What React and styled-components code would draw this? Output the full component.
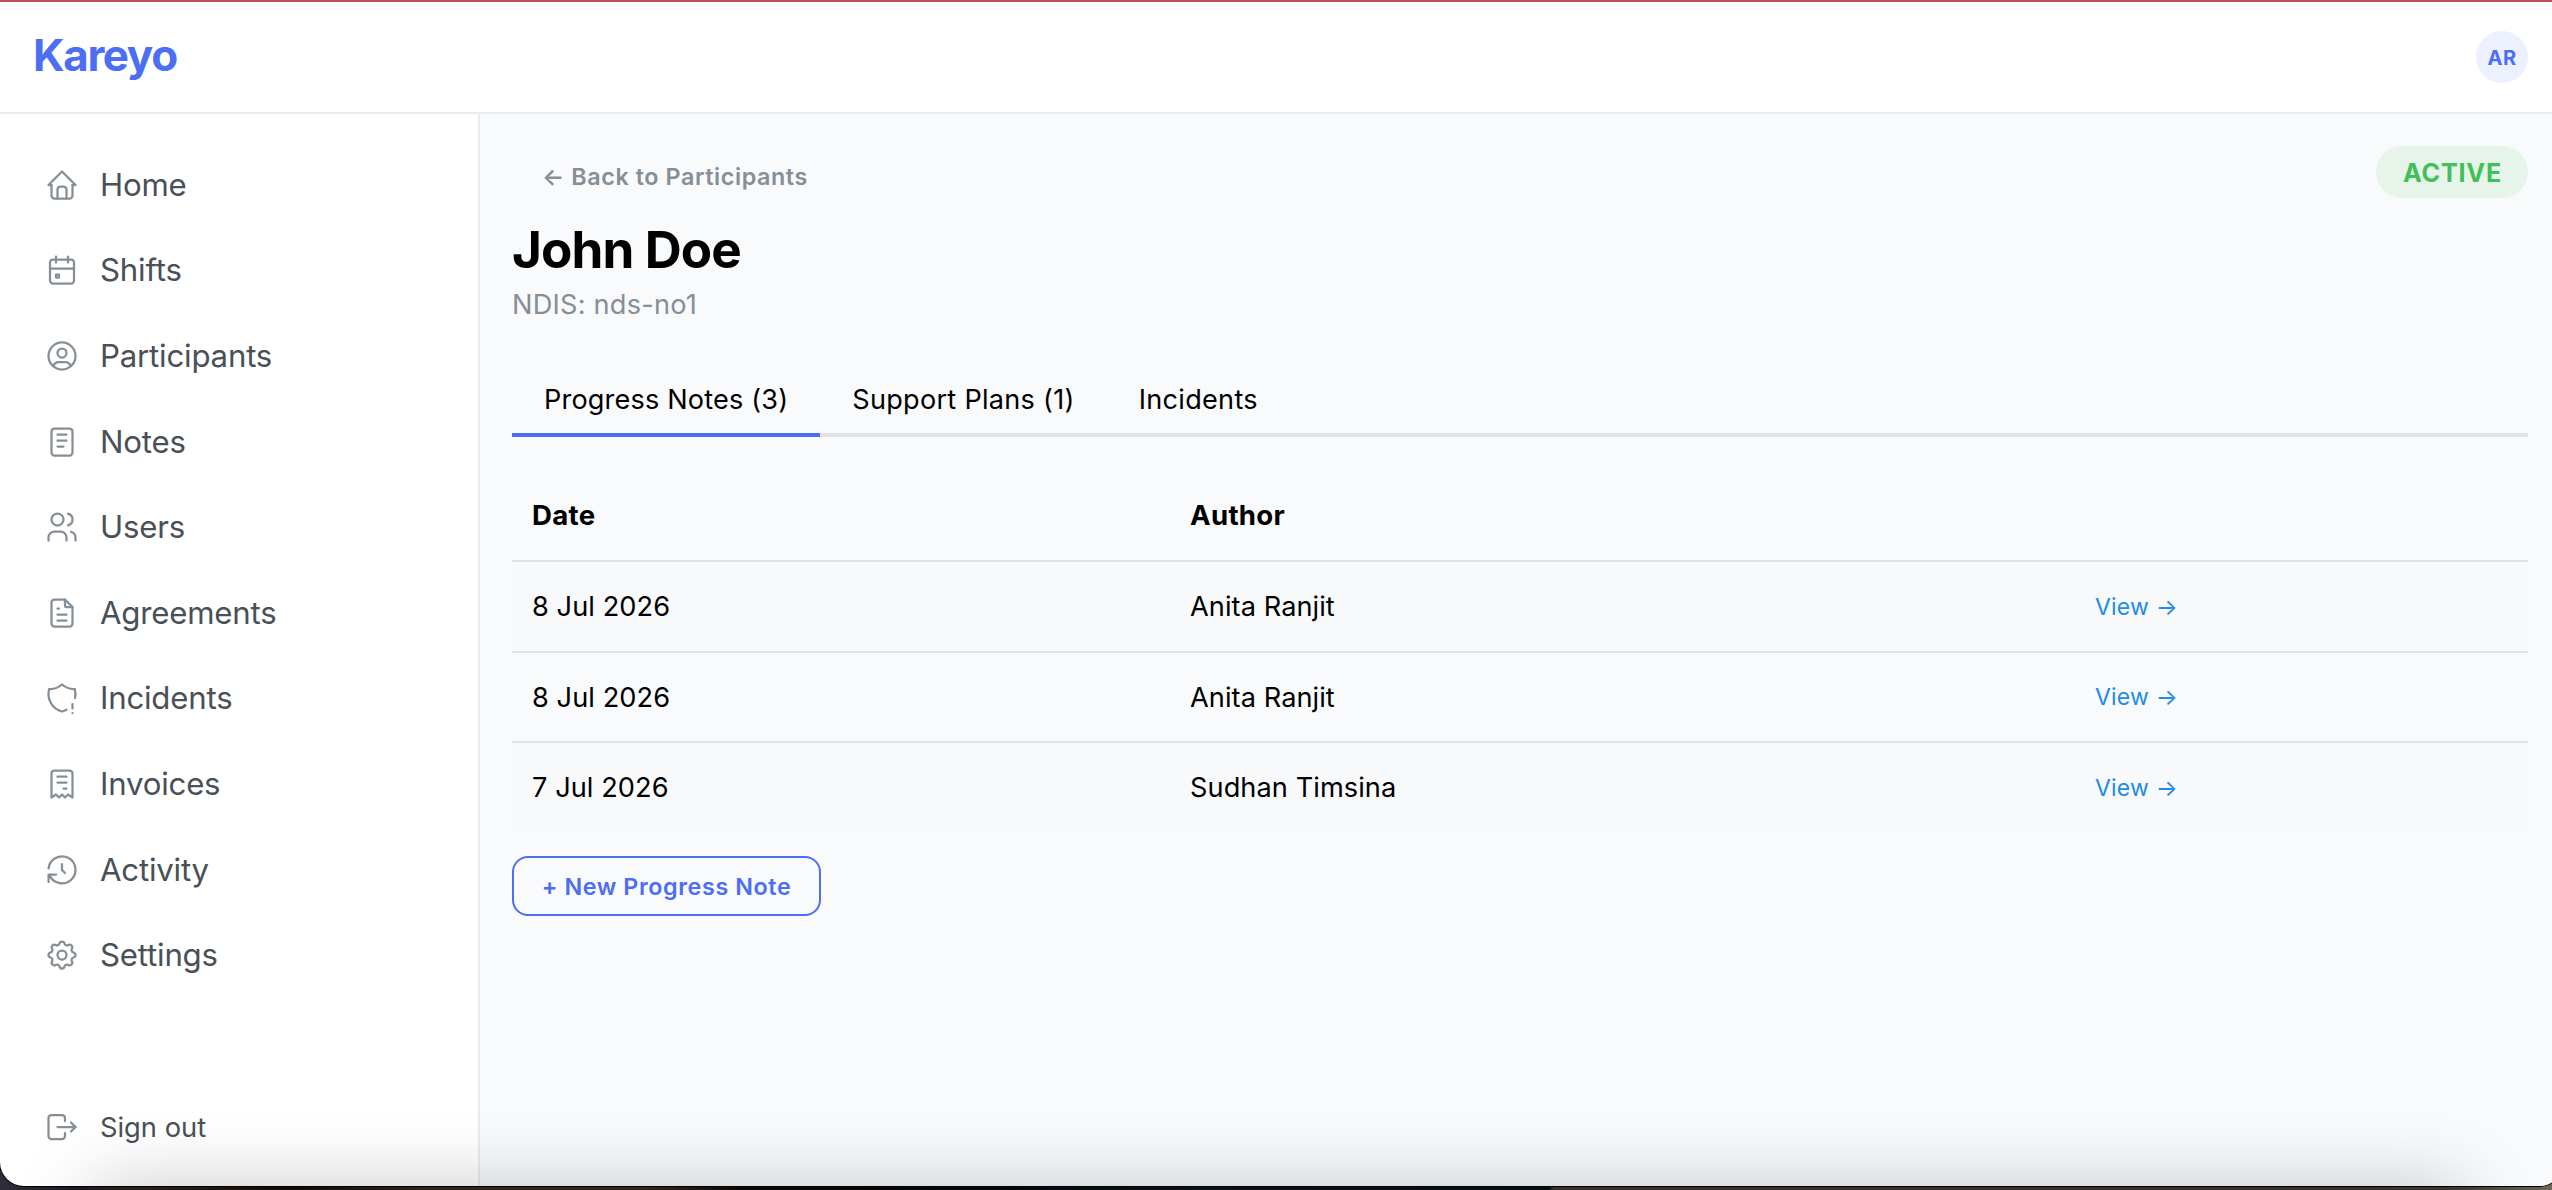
import React from "react";
import styled, { createGlobalStyle, css } from "styled-components";
import {
  TbHome,
  TbCalendarEvent,
  TbUserCircle,
  TbNotes,
  TbUsers,
  TbFileText,
  TbShieldExclamation,
  TbReceipt,
  TbHistory,
  TbSettings,
  TbLogout,
} from "react-icons/tb";

const GlobalStyle = createGlobalStyle`
  * { box-sizing: border-box; }
  body {
    margin: 0;
    overflow: hidden;
    font-family: Inter, "Liberation Sans", sans-serif;
    -webkit-font-smoothing: antialiased;
  }
`;

const Desktop = styled.div`
  width: 100%;
  height: 1190px;
  overflow: hidden;
  background: linear-gradient(
    90deg,
    #2e2e3a 0,
    #1c1a20 80px,
    #2c2119 140px,
    #0f0b08 290px,
    #33241a 430px,
    #33241a 650px,
    #0a0806 740px,
    #04070b 1000px,
    #08121d 1200px,
    #060c16 1549px,
    #35312b 1553px,
    #35312b 2230px,
    #3a342d 2450px,
    #6b6658 2552px
  );
`;

const Window = styled.div`
  position: relative;
  display: flex;
  flex-direction: column;
  width: 2563px;
  height: 1186px;
  overflow: hidden;
  background: #fff;
  border-top: 2px solid #bb5157;
  border-radius: 0 0 24px 24px;
  box-shadow: 0 0 0 1px #000;
`;

const BottomShade = styled.div`
  position: absolute;
  top: 100%;
  left: 90px;
  right: 100px;
  height: 200px;
  box-shadow: 0 0 76px rgba(0, 0, 0, 0.21);
  pointer-events: none;
`;

const Header = styled.header`
  display: flex;
  align-items: center;
  justify-content: space-between;
  flex: none;
  height: 112px;
  padding: 0 35px 0 33px;
  border-bottom: 2px solid #e9ecef;
`;

const Brand = styled.div`
  color: #4c6ef5;
  font-size: 44px;
  font-weight: 700;
  letter-spacing: -1.4px;
  line-height: 52px;
  padding-bottom: 4px;
`;

const Avatar = styled.div`
  display: flex;
  align-items: center;
  justify-content: center;
  width: 52px;
  height: 52px;
  padding-top: 1px;
  border-radius: 50%;
  background: #edf0fe;
  color: #4c6ef5;
  font-size: 20px;
  font-weight: 700;
  letter-spacing: 0.4px;
`;

const Body = styled.div`
  display: flex;
  flex: 1;
  min-height: 0;
`;

const Sidebar = styled.nav`
  display: flex;
  flex-direction: column;
  justify-content: space-between;
  flex: none;
  width: 480px;
  padding: 28px 0 29px;
  border-right: 2px solid #e9ecef;
`;

const NavList = styled.div`
  display: flex;
  flex-direction: column;
`;

const NavItem = styled.a`
  display: flex;
  align-items: center;
  gap: 20px;
  height: ${(p) => (p.$compact ? 60 : 85.6)}px;
  padding: 0 44px;
  color: #495057;
  font-size: ${(p) => (p.$compact ? 27.3 : 31.2)}px;
  letter-spacing: ${(p) => (p.$compact ? 0 : -0.2)}px;

  svg {
    flex: none;
    width: 36px;
    height: 36px;
    color: #868e96;
    stroke-width: 1.5;
  }
`;

const Main = styled.main`
  display: flex;
  flex-direction: column;
  align-items: stretch;
  flex: 1;
  padding: 32px 35px 0 32px;
  background: #f9fafc;
`;

const TopRow = styled.div`
  display: flex;
  align-items: flex-start;
  justify-content: space-between;
`;

const buttonText = css`
  font-family: inherit;
  font-size: 23.3px;
  font-weight: 600;
  letter-spacing: 0.6px;
  white-space: nowrap;
`;

const BackButton = styled.button`
  ${buttonText}
  height: 60px;
  padding: 0 30px;
  border: 0;
  background: transparent;
  color: #868e96;
`;

const StatusBadge = styled.span`
  display: flex;
  align-items: center;
  justify-content: center;
  width: 152px;
  height: 52px;
  padding: 2px 0 0 1px;
  border-radius: 26px;
  background: #e6f4ea;
  color: #40c057;
  font-size: 25.2px;
  font-weight: 700;
  letter-spacing: 0.8px;
`;

const Title = styled.h1`
  margin: 11px 0 0;
  color: #000;
  font-size: 51.2px;
  font-weight: 700;
  letter-spacing: -0.9px;
  line-height: 64px;
`;

const Subtitle = styled.div`
  margin-top: 2px;
  color: #868e96;
  font-size: 27.2px;
  letter-spacing: 0.2px;
  line-height: 44px;
`;

const Tabs = styled.div`
  display: flex;
  height: 72px;
  margin-top: 38px;
  box-shadow: inset 0 -4px 0 #dfe1e6;
`;

const Tab = styled.button`
  height: 72px;
  padding: 0 32px;
  border: 0;
  border-bottom: 4px solid ${(p) => (p.$active ? "#4c6ef5" : "transparent")};
  background: transparent;
  color: #000;
  font-family: inherit;
  font-size: 27.1px;
  letter-spacing: ${(p) => (p.$active ? 0.17 : 0.28)}px;
  white-space: nowrap;
`;

const Table = styled.div`
  display: flex;
  flex-direction: column;
  margin-top: 33px;
`;

const Row = styled.div`
  display: grid;
  grid-template-columns: 658px 905.5px 1fr;
  align-items: center;
  height: ${(p) => p.$height}px;
  border-bottom: ${(p) => (p.$last ? "0" : "2px solid #dfe1e6")};
  background: ${(p) => (p.$striped ? "#f8f9fb" : "transparent")};
  font-weight: ${(p) => (p.$head ? 700 : 400)};
  font-size: ${(p) => (p.$head ? 27.6 : 27.2)}px;
  letter-spacing: ${(p) => (p.$head ? 0.3 : 0.06)}px;
`;

const Cell = styled.div`
  display: flex;
  align-items: center;
  padding: 0 20px;
  color: #000;
`;

const ViewLink = styled.a`
  color: #228be6;
  font-size: 23px;
  letter-spacing: 0.2px;
  line-height: 28px;
  margin-left: -0.5px;
`;

const NewNoteButton = styled.button`
  ${buttonText}
  align-self: flex-start;
  width: 309px;
  height: 60px;
  margin-top: 24px;
  padding: 0;
  border: 2px solid #4c6ef5;
  border-radius: 16px;
  background: transparent;
  color: #4c6ef5;
`;

const NAV = [
  ["Home", TbHome],
  ["Shifts", TbCalendarEvent],
  ["Participants", TbUserCircle],
  ["Notes", TbNotes],
  ["Users", TbUsers],
  ["Agreements", TbFileText],
  ["Incidents", TbShieldExclamation],
  ["Invoices", TbReceipt],
  ["Activity", TbHistory],
  ["Settings", TbSettings],
];

const NOTES = [
  { date: "8 Jul 2026", author: "Anita Ranjit", height: 91 },
  { date: "8 Jul 2026", author: "Anita Ranjit", height: 90 },
  { date: "7 Jul 2026", author: "Sudhan Timsina", height: 89 },
];

export default function App() {
  return (
    <Desktop>
      <GlobalStyle />
      <Window>
        <Header>
          <Brand>Kareyo</Brand>
          <Avatar>AR</Avatar>
        </Header>
        <Body>
          <Sidebar>
            <NavList>
              {NAV.map(([label, Icon]) => (
                <NavItem key={label}>
                  <Icon />
                  {label}
                </NavItem>
              ))}
            </NavList>
            <NavItem $compact>
              <TbLogout />
              Sign out
            </NavItem>
          </Sidebar>
          <Main>
            <TopRow>
              <BackButton>← Back to Participants</BackButton>
              <StatusBadge>ACTIVE</StatusBadge>
            </TopRow>
            <Title>John Doe</Title>
            <Subtitle>NDIS: nds-no1</Subtitle>
            <Tabs>
              <Tab $active>Progress Notes (3)</Tab>
              <Tab>Support Plans (1)</Tab>
              <Tab>Incidents</Tab>
            </Tabs>
            <Table>
              <Row $head $height={92}>
                <Cell>Date</Cell>
                <Cell>Author</Cell>
                <Cell />
              </Row>
              {NOTES.map((note, i) => (
                <Row
                  key={i}
                  $height={note.height}
                  $striped={i % 2 === 0}
                  $last={i === NOTES.length - 1}
                >
                  <Cell>{note.date}</Cell>
                  <Cell>{note.author}</Cell>
                  <Cell>
                    <ViewLink>View →</ViewLink>
                  </Cell>
                </Row>
              ))}
            </Table>
            <NewNoteButton>+ New Progress Note</NewNoteButton>
          </Main>
        </Body>
        <BottomShade />
      </Window>
    </Desktop>
  );
}
